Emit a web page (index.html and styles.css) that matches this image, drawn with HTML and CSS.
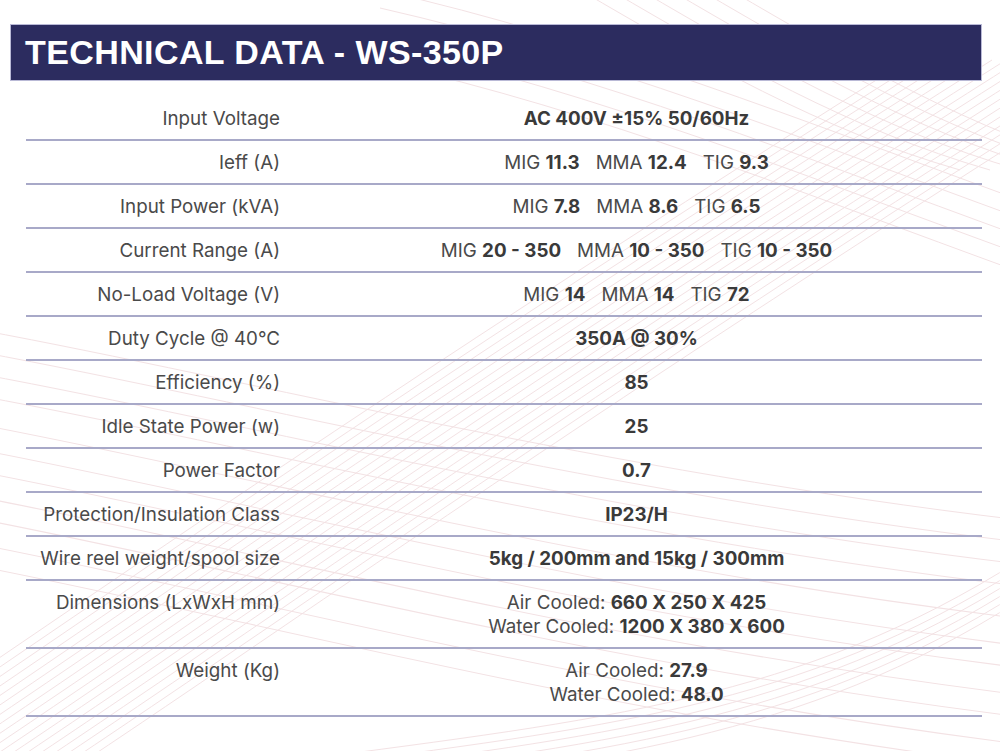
FILE: index.html
```html
<!DOCTYPE html>
<html lang="en">
<head>
<meta charset="utf-8">
<title>Technical Data - WS-350P</title>
<link rel="stylesheet" href="styles.css">
</head>
<body>
<svg class="bg" width="1000" height="751" viewBox="0 0 1000 751" aria-hidden="true">
  <defs>
    <path id="fa" d="M-20 330 C 250 380, 600 470, 1020 520"/>
    <path id="fb" d="M-40 760 C 200 600, 450 420, 1020 60"/>
    <path id="fc" d="M380 -10 C 600 40, 800 120, 1020 200"/>
    <path id="fd" d="M640 -10 C 760 60, 880 130, 1020 170"/>
    <path id="fe" d="M300 760 C 600 720, 800 700, 1020 560"/>
  </defs>
  <g class="curves">
    <use href="#fa"/><use href="#fa" transform="translate(0,22)"/><use href="#fa" transform="translate(0,44)"/><use href="#fa" transform="translate(0,66)"/><use href="#fa" transform="translate(0,88) scale(1,1.02)"/><use href="#fa" transform="translate(0,110) scale(1,1.03)"/><use href="#fa" transform="translate(0,132) scale(1,1.03)"/><use href="#fa" transform="translate(0,154) scale(1,1.04)"/><use href="#fa" transform="translate(0,176) scale(1,1.04)"/><use href="#fa" transform="translate(0,198) scale(1,1.05)"/><use href="#fa" transform="translate(0,220) scale(1,1.05)"/>
    <use href="#fb"/><use href="#fb" transform="translate(14,0)"/><use href="#fb" transform="translate(28,0)"/><use href="#fb" transform="translate(42,0)"/><use href="#fb" transform="translate(56,0)"/><use href="#fb" transform="translate(70,0)"/><use href="#fb" transform="translate(84,0)"/><use href="#fb" transform="translate(98,0)"/><use href="#fb" transform="translate(112,0)"/><use href="#fb" transform="translate(126,0)"/><use href="#fb" transform="translate(-14,0)"/><use href="#fb" transform="translate(-28,0)"/><use href="#fb" transform="translate(-42,0)"/><use href="#fb" transform="translate(-56,0)"/><use href="#fb" transform="translate(-70,0)"/><use href="#fb" transform="translate(-84,0)"/><use href="#fb" transform="translate(-98,0)"/><use href="#fb" transform="translate(-112,0)"/>
    <use href="#fc"/><use href="#fc" transform="translate(0,18)"/><use href="#fc" transform="translate(0,36)"/><use href="#fc" transform="translate(0,54)"/><use href="#fc" transform="translate(0,72)"/>
    <use href="#fd"/><use href="#fd" transform="translate(30,0)"/><use href="#fd" transform="translate(60,0)"/><use href="#fd" transform="translate(90,0)"/><use href="#fd" transform="translate(-30,0)"/><use href="#fd" transform="translate(-60,0)"/>
    <use href="#fe"/><use href="#fe" transform="translate(0,8)"/><use href="#fe" transform="translate(0,16)"/><use href="#fe" transform="translate(0,24)"/><use href="#fe" transform="translate(0,32)"/><use href="#fe" transform="translate(0,40)"/>
  </g>
</svg>
<main class="sheet">
  <h1 class="title">TECHNICAL DATA - WS-350P</h1>
  <div class="specs">
    <div class="row"><div class="label">Input Voltage</div><div class="value"><b>AC 400V ±15% 50/60Hz</b></div></div>
    <div class="row"><div class="label">Ieff (A)</div><div class="value"><span class="item">MIG <b>11.3</b></span><span class="item">MMA <b>12.4</b></span><span class="item">TIG <b>9.3</b></span></div></div>
    <div class="row"><div class="label">Input Power (kVA)</div><div class="value"><span class="item">MIG <b>7.8</b></span><span class="item">MMA <b>8.6</b></span><span class="item">TIG <b>6.5</b></span></div></div>
    <div class="row"><div class="label">Current Range (A)</div><div class="value"><span class="item">MIG <b>20 - 350</b></span><span class="item">MMA <b>10 - 350</b></span><span class="item">TIG <b>10 - 350</b></span></div></div>
    <div class="row"><div class="label">No-Load Voltage (V)</div><div class="value"><span class="item">MIG <b>14</b></span><span class="item">MMA <b>14</b></span><span class="item">TIG <b>72</b></span></div></div>
    <div class="row"><div class="label">Duty Cycle @ 40°C</div><div class="value"><b>350A @ 30%</b></div></div>
    <div class="row"><div class="label">Efficiency (%)</div><div class="value"><b>85</b></div></div>
    <div class="row"><div class="label">Idle State Power (w)</div><div class="value"><b>25</b></div></div>
    <div class="row"><div class="label">Power Factor</div><div class="value"><b>0.7</b></div></div>
    <div class="row"><div class="label">Protection/Insulation Class</div><div class="value"><b>IP23/H</b></div></div>
    <div class="row"><div class="label">Wire reel weight/spool size</div><div class="value"><b>5kg / 200mm and 15kg / 300mm</b></div></div>
    <div class="row"><div class="label">Dimensions (LxWxH mm)</div><div class="value"><div>Air Cooled: <b>660 X 250 X 425</b></div><div>Water Cooled: <b>1200 X 380 X 600</b></div></div></div>
    <div class="row"><div class="label">Weight (Kg)</div><div class="value"><div>Air Cooled: <b>27.9</b></div><div>Water Cooled: <b>48.0</b></div></div></div>
  </div>
</main>
</body>
</html>
```

FILE: styles.css
```css
html, body {
  margin: 0;
  padding: 0;
  background: #ffffff;
}
body {
  width: 1000px;
  height: 751px;
  overflow: hidden;
  position: relative;
  font-family: Inter, "Noto Sans", "Liberation Sans", sans-serif;
  color: #4a4a4a;
}
.bg {
  position: absolute;
  left: 0;
  top: 0;
  z-index: 0;
}
.curves use {
  fill: none;
  stroke: #f3e2e4;
  stroke-width: 1;
}
.sheet {
  position: relative;
  z-index: 1;
  padding: 24px 0 0 10px;
  width: 972px;
}
.title {
  margin: 0;
  height: 57px;
  box-sizing: border-box;
  background: #2c2c5f;
  border: 1px solid #b9b9d6;
  color: #ffffff;
  font-family: "Liberation Sans", Arial, sans-serif;
  font-weight: 700;
  font-size: 34px;
  letter-spacing: 0.4px;
  line-height: 55px;
  padding-left: 14px;
}
.specs {
  margin: 16px 0 0 16px;
}
.row {
  display: grid;
  grid-template-columns: 265px 1fr;
  border-bottom: 2px solid #a8a9c8;
  padding: 10px 0 8px;
  font-size: 18.8px;
  line-height: 24px;
}
.label {
  text-align: right;
  padding-right: 11px;
}
.value {
  text-align: center;
  color: #4a4a4a;
}
.value b {
  font-weight: 700;
  color: #3a3a3a;
}
.item + .item {
  margin-left: 16px;
}
```
